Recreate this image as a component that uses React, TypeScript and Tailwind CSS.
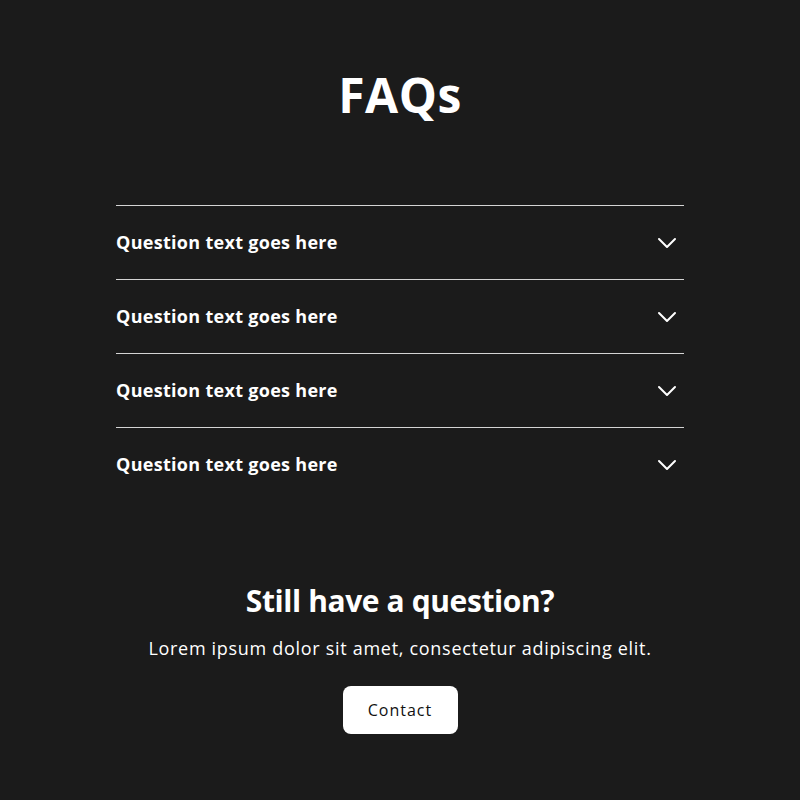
const questions = [
  "Question text goes here",
  "Question text goes here",
  "Question text goes here",
  "Question text goes here",
];

function Chevron() {
  return (
    <svg
      width="20"
      height="12"
      viewBox="0 0 20 12"
      fill="none"
      stroke="currentColor"
      strokeWidth="2"
      strokeLinecap="round"
      strokeLinejoin="round"
      className="mr-[7px]"
    >
      <polyline points="2,2 10,10 18,2" />
    </svg>
  );
}

export default function App() {
  return (
    <div className="min-h-[800px] w-full bg-[#1b1b1b] text-white font-['Open_Sans',sans-serif] flex flex-col items-center">
      <h1 className="mt-[66px] text-[48px] leading-[58px] font-bold tracking-[0.5px]">FAQs</h1>

      <ul className="mt-[81px] w-[568px] flex flex-col">
        {questions.map((q, i) => (
          <li
            key={i}
            className="h-[74px] border-t border-[#d4d4d4] flex flex-row items-center justify-between"
          >
            <span className="text-[18px] font-bold tracking-[0.3px]">{q}</span>
            <Chevron />
          </li>
        ))}
      </ul>

      <h2 className="mt-[80px] text-[30px] leading-[40px] font-bold tracking-[-0.4px]">
        Still have a question?
      </h2>
      <p className="mt-[13px] text-[18px] leading-[28px] font-normal tracking-[0.7px]">
        Lorem ipsum dolor sit amet, consectetur adipiscing elit.
      </p>
      <button className="mt-[24px] w-[115px] h-[48px] rounded-[8px] bg-white text-[#111] text-[16px] tracking-[1px]">
        Contact
      </button>
    </div>
  );
}
